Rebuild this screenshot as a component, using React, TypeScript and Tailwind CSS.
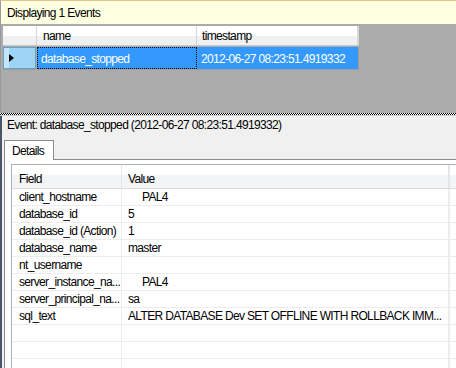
const font = { fontFamily: '"Liberation Sans", Arial, sans-serif' };

const rows: [string, string, boolean?][] = [
    ["client_hostname", "PAL4", true],
    ["database_id", "5"],
    ["database_id (Action)", "1"],
    ["database_name", "master"],
    ["nt_username", ""],
    ["server_instance_na...", "PAL4", true],
    ["server_principal_na...", "sa"],
    ["sql_text", "ALTER DATABASE Dev SET OFFLINE WITH ROLLBACK IMM..."],
    ["", ""],
    ["", ""],
    ["", ""],
];

function EventGrid() {
    return (
        <div className="h-[89px] bg-[#ababab] border-l border-[#9a9a9a] pt-[2px] pl-[2px]">
            <div className="flex h-[20px] w-[356px] border-b border-[#c8c8c8]">
                <div className="w-[34px] h-full bg-[linear-gradient(#ffffff_55%,#eef0f2_55%)] border-r border-[#d5d5d5]" />
                <div className="w-[160px] h-full bg-[linear-gradient(#ffffff_55%,#eef0f2_55%)] border-r border-[#d5d5d5] pl-[6px] leading-[21px]">
                    name
                </div>
                <div className="flex-1 h-full bg-[linear-gradient(#ffffff_55%,#eef0f2_55%)] border-r-2 border-[#d8d8d8] pl-[5px] leading-[21px]">
                    timestamp
                </div>
            </div>
            <div className="flex h-[23px] w-[356px] mt-[1px] border-b border-[#9e9e9e]">
                <div className="w-[33px] h-full bg-[linear-gradient(90deg,#c4e6fa_5px,#9ed5f6_5px)] border border-[#6a9fc4] flex items-center pl-[5px] mr-[1px]">
                    <span className="w-0 h-0 border-y-[4px] border-y-transparent border-l-[5px] border-l-black" />
                </div>
                <div className="w-[160px] h-full bg-[#3399ff] text-white flex items-center">
                    <div className="w-full h-full border border-dotted border-black flex items-center pl-[3px] pt-[1px]">
                        database_stopped
                    </div>
                </div>
                <div className="flex-1 h-full bg-[#3399ff] text-white flex items-center pl-[4px] pt-[1px] border-r border-[#9e9e9e]">
                    2012-06-27 08:23:51.4919332
                </div>
            </div>
        </div>
    );
}

function DetailsList() {
    return (
        <div className="border-l border-t border-[#aab0b8] bg-white">
            <div className="flex h-[24px] border-b border-[#dcdcdc] bg-[linear-gradient(#ffffff_45%,#f3f4f6_45%)]">
                <div className="w-[110px] border-r border-[#e3e5e8] pl-[7px] pt-[5px]">Field</div>
                <div className="w-[328px] border-r-2 border-[#e3e5e8] pl-[6px] pt-[5px]">Value</div>
                <div className="flex-1" />
            </div>
            {rows.map(([field, value, indent], i) => (
                <div key={i} className="flex h-[17px] border-b border-[#ececec] leading-[17px]">
                    <div className="w-[110px] border-r border-[#ececec] pl-[7px] whitespace-nowrap overflow-hidden">
                        {field}
                    </div>
                    <div
                        className={`w-[328px] border-r-2 border-[#ececec] whitespace-nowrap overflow-hidden ${
                            indent ? "pl-[20px]" : "pl-[6px]"
                        }`}>
                        {value}
                    </div>
                    <div className="flex-1" />
                </div>
            ))}
        </div>
    );
}

export default function App() {
    return (
        <div
            className="w-[456px] h-[368px] overflow-hidden bg-[#f0f0f0] text-[12px] tracking-[-0.65px] text-black"
            style={font}>
            <div className="h-[24px] bg-[#ffffe1] border-t border-[#e2c48e] border-l border-l-[#9a9a9a] pl-[6px] leading-[25px]">
                Displaying 1 Events
            </div>
            <EventGrid />
            <div className="h-[3px] bg-[repeating-conic-gradient(#000000_0_25%,#ffffff_0_50%)] bg-[length:2px_2px] border-b border-[#d0d0d0]" />
            <div className="h-[252px] flex flex-col border-l-2 border-[#4a5566]">
                <div className="h-[18px] leading-[18px] pl-[5px]">
                    Event: database_stopped (2012-06-27 08:23:51.4919332)
                </div>
                <div className="flex flex-col flex-1 pl-[2px] mt-[6px]">
                    <div className="flex">
                        <div className="w-[50px] h-[20px] bg-white border-t border-l border-r border-[#898c95] pl-[7px] leading-[20px] -mb-px relative">
                            Details
                        </div>
                    </div>
                    <div className="flex-1 bg-white border-t border-l border-[#898c95] pl-[6px] pt-[4px]">
                        <DetailsList />
                    </div>
                </div>
            </div>
        </div>
    );
}
